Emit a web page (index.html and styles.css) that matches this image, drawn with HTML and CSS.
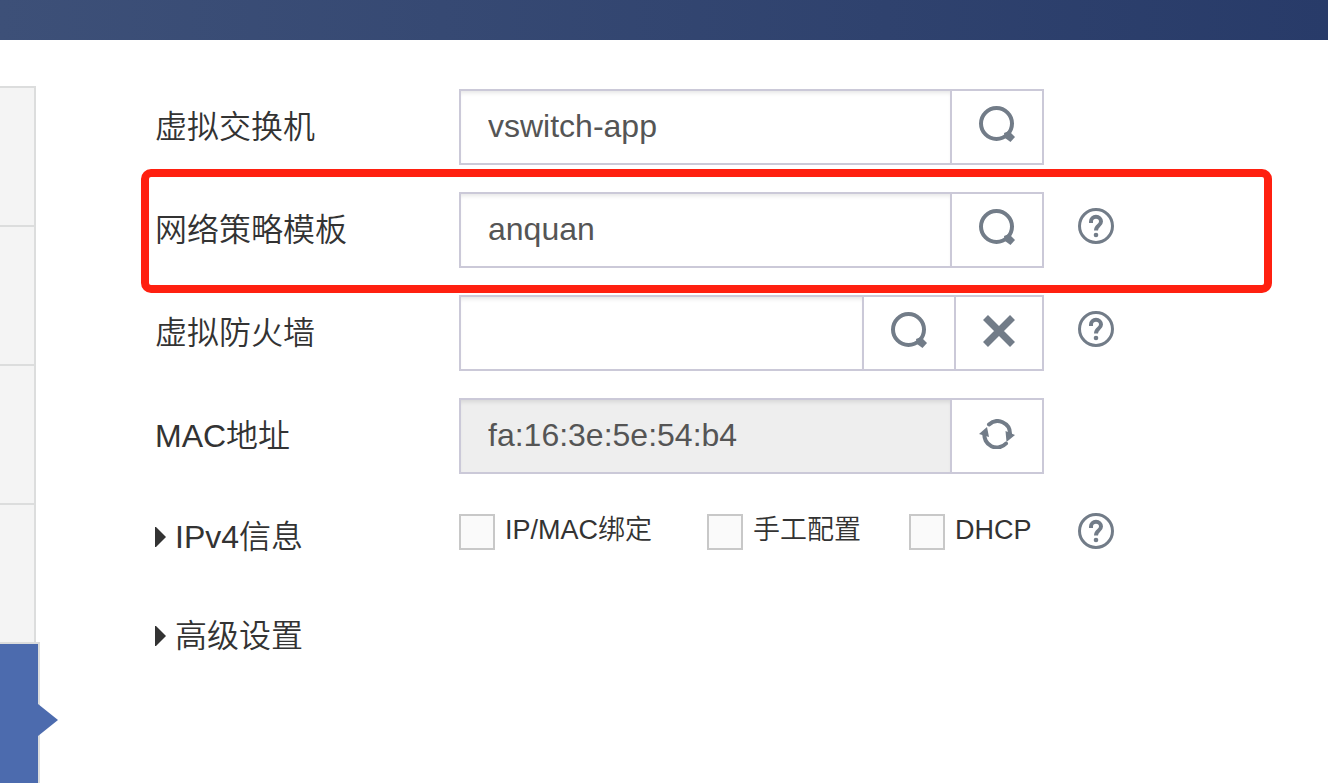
FILE: index.html
```html
<!DOCTYPE html>
<html lang="zh-CN">
<head>
    <meta charset="UTF-8">
    <meta name="viewport" content="width=device-width, initial-scale=1.0">
    <title>网络配置</title>
    <link rel="stylesheet" href="styles.css">
</head>
<body>
<!-- Shared icons -->
<svg class="icon-defs" aria-hidden="true">
    <symbol id="icon-search" viewBox="0 0 38 38">
        <circle cx="18.500" cy="17.500" r="15.500" fill="none" stroke="currentColor" stroke-width="4"/>
        <path d="M27 32l-1-5 5-2 6 6-4.500 5z" fill="currentColor"/>
    </symbol>
    <symbol id="icon-help" viewBox="0 0 36 36">
        <circle cx="18" cy="18" r="16.500" fill="none" stroke="currentColor" stroke-width="3"/>
        <path d="M13 15v-1.500a5 4.800 0 0 1 10 0c0 4.500-5 3.500-5 9" fill="none" stroke="currentColor" stroke-width="4"/>
        <circle cx="18" cy="27" r="2.300" fill="currentColor"/>
    </symbol>
</svg>

<header class="topbar"></header>

<div class="page">
    <nav class="steps">
        <div class="step"></div>
        <div class="step"></div>
        <div class="step"></div>
        <div class="step"></div>
        <div class="step active"></div>
    </nav>

    <form class="settings">
        <div class="row">
            <label class="row-label" for="vswitch">虚拟交换机</label>
            <div class="field">
                <input type="text" id="vswitch" value="vswitch-app">
                <button type="button" aria-label="选择"><svg class="icon-search"><use href="#icon-search"/></svg></button>
            </div>
        </div>

        <div class="row highlight">
            <label class="row-label" for="policy">网络策略模板</label>
            <div class="field">
                <input type="text" id="policy" value="anquan">
                <button type="button" aria-label="选择"><svg class="icon-search"><use href="#icon-search"/></svg></button>
            </div>
            <button type="button" class="help" aria-label="帮助"><svg><use href="#icon-help"/></svg></button>
        </div>

        <div class="row">
            <label class="row-label" for="firewall">虚拟防火墙</label>
            <div class="field">
                <input type="text" id="firewall">
                <button type="button" aria-label="选择"><svg class="icon-search"><use href="#icon-search"/></svg></button>
                <button type="button" class="clear" aria-label="清除">
                    <svg class="icon-clear" viewBox="0 0 32 32"><path d="M2.500 2.500l27 27M29.500 2.500l-27 27" stroke="currentColor" stroke-width="7"/></svg>
                </button>
            </div>
            <button type="button" class="help" aria-label="帮助"><svg><use href="#icon-help"/></svg></button>
        </div>

        <div class="row">
            <label class="row-label" for="mac">MAC地址</label>
            <div class="field">
                <input type="text" id="mac" value="fa:16:3e:5e:54:b4" readonly>
                <button type="button" aria-label="刷新">
                    <svg class="icon-refresh" viewBox="0 0 36 30">
                        <path d="M10 5.500A12.500 12.500 0 0 1 31 15M27 24.500A12.500 12.500 0 0 1 5.500 14" fill="none" stroke="currentColor" stroke-width="4" stroke-linecap="round"/>
                        <path d="M0 15L8 8l2 10zM26.500 12l9.500 4-8.500 7z" fill="currentColor"/>
                    </svg>
                </button>
            </div>
        </div>

        <div class="row options">
            <button type="button" class="toggle row-label"><svg viewBox="0 0 11 20"><path d="M0 0h1l10 10L1 20H0z" fill="currentColor"/></svg>IPv4信息</button>
            <div class="checks">
                <label><input type="checkbox">IP/MAC绑定</label>
                <label><input type="checkbox">手工配置</label>
                <label><input type="checkbox">DHCP</label>
            </div>
            <button type="button" class="help" aria-label="帮助"><svg><use href="#icon-help"/></svg></button>
        </div>

        <div class="row options">
            <button type="button" class="toggle row-label"><svg viewBox="0 0 11 20"><path d="M0 0h1l10 10L1 20H0z" fill="currentColor"/></svg>高级设置</button>
        </div>
    </form>
</div>
</body>
</html>
```

FILE: styles.css
```css
* {
    box-sizing: border-box;
}

body {
    display: flex;
    flex-direction: column;
    min-height: 100vh;
    margin: 0;
    font-family: "Liberation Sans", "Noto Sans CJK SC", sans-serif;
    font-size: 32px;
    font-weight: 350;
    color: #333;
    background-color: #fff;
}

input, button {
    font: inherit;
    color: inherit;
}

button {
    padding: 0;
    border: none;
    background: none;
    cursor: pointer;
}

svg {
    display: block;
}

.icon-defs {
    position: absolute;
    width: 0;
    height: 0;
}

.topbar {
    height: 40px;
    background: linear-gradient(to right, #3d5078, #283b69);
}

.page {
    display: flex;
    flex: 1;
}

/* Left step list */
.steps {
    display: flex;
    flex-direction: column;
    width: 40px;
    padding-top: 46px;
}

.step {
    width: 36px;
    height: 139px;
    border-top: 2px solid #dcdddd;
    border-right: 2px solid #dcdddd;
    background-color: #f4f4f4;
}

.step.active {
    position: relative;
    flex: 1;
    width: 40px;
    background-color: #4c6bae;
}

.step.active::after {
    content: "";
    position: absolute;
    top: 60px;
    left: 38px;
    border: 16px solid transparent;
    border-left: 20px solid #4c6bae;
    border-right: none;
}

/* Form */
.settings {
    flex: 1;
    padding: 49px 56px 0 115px;
}

.row {
    position: relative;
    display: flex;
    align-items: center;
    margin-bottom: 27px;
}

.row-label {
    width: 304px;
    line-height: 48px;
}

/* Red frame round the row */
.highlight::after {
    content: "";
    position: absolute;
    top: -23px;
    right: 0;
    bottom: -25px;
    left: -14px;
    border: 8px solid #ff2010;
    border-radius: 10px;
    pointer-events: none;
}

.field {
    display: flex;
    width: 585px;
    height: 76px;
}

.field input {
    flex: 1;
    min-width: 0;
    padding: 0 27px 2px;
    border: 2px solid #cbc9d8;
    border-radius: 0;
    outline: none;
    color: #555;
    background-color: #fff;
    box-shadow: inset 0 4px 4px -2px rgba(0, 0, 0, 0.1);
}

.field input[readonly] {
    background-color: #eee;
}

.field button {
    display: flex;
    justify-content: center;
    align-items: center;
    width: 94px;
    margin-left: -2px;
    padding-bottom: 4px;
    border: 2px solid #cbc9d8;
    color: #727c88;
    background-color: #fff;
}

.field .clear {
    width: 90px;
}

.icon-search {
    width: 38px;
    height: 38px;
}

.icon-clear {
    width: 32px;
    height: 32px;
}

.icon-refresh {
    width: 36px;
    height: 30px;
}

.help {
    margin-left: 34px;
    padding-bottom: 8px;
    color: #727c88;
}

.help svg {
    width: 36px;
    height: 36px;
}

.options {
    height: 48px;
    margin: 39px 0 51px;
}

.options .help {
    padding-bottom: 12px;
}

.toggle {
    display: flex;
    align-items: center;
    gap: 9px;
    text-align: left;
}

.toggle svg {
    width: 11px;
    height: 20px;
}

.checks {
    display: grid;
    grid-template-columns: 248px 202px 1fr;
    width: 585px;
    padding-bottom: 10px;
}

.checks label {
    display: flex;
    align-items: flex-start;
    gap: 10px;
    font-size: 27px;
    line-height: 32px;
}

.checks input {
    appearance: none;
    width: 36px;
    height: 36px;
    margin: 0;
    border: 2px solid #c8c8c8;
    background-color: #fafafa;
}

.checks input:checked {
    background-color: #4c6bae;
}
```
